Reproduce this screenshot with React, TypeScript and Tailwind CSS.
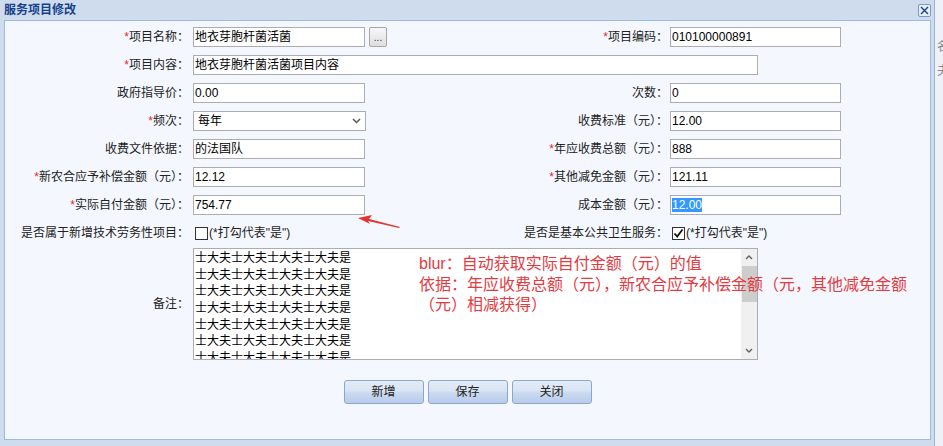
import type { ReactNode } from 'react'

const FONT = "font-['Liberation_Sans','Noto_Sans_CJK_SC',sans-serif]"

function Req() {
  return <span className="text-[#e8262b]">*</span>
}

function Field({ children, w = 'w-[172px]' }: { children?: ReactNode; w?: string }) {
  return (
    <div className={`${w} h-[20px] shrink-0 border border-[#abadb3] bg-white px-[1px] text-[12px] leading-[18px] text-black`}>
      {children}
    </div>
  )
}

function Label({ children, w }: { children: ReactNode; w: string }) {
  return <div className={`${w} shrink-0 text-right text-[12px] leading-[20px] text-[#222]`}>{children}</div>
}

function Row({ left, right }: { left: ReactNode; right?: ReactNode }) {
  return (
    <div className="flex h-[20px] items-center">
      <div className="flex w-[465px] shrink-0 items-center">{left}</div>
      {right && <div className="flex items-center">{right}</div>}
    </div>
  )
}

function CheckBox({ checked }: { checked?: boolean }) {
  return (
    <div className="flex h-[13px] w-[13px] items-center justify-center border border-[#333] bg-white">
      {checked && (
        <svg width="11" height="11" viewBox="0 0 11 11">
          <path d="M1.5 5.5 L4.2 8.5 L9.5 1.5" fill="none" stroke="#111" strokeWidth="1.8" />
        </svg>
      )}
    </div>
  )
}

function Btn({ children }: { children: ReactNode }) {
  return (
    <div className="flex h-[24px] w-[80px] items-center justify-center rounded-[3px] border border-[#8fa6cc] bg-[linear-gradient(180deg,#e4ecf8_0%,#d9e4f4_45%,#c9d9ef_55%,#b8cceb_100%)] text-[12px] text-[#222]">
      {children}
    </div>
  )
}

const NOTE_LINE = '士大夫士大夫士大夫士大夫是'

export default function App() {
  return (
    <div className={`relative flex h-[446px] w-[943px] overflow-hidden bg-[#eef2f8] ${FONT}`}>
      <div className="flex w-[935px] shrink-0 flex-col border-r border-[#9fb3cf] bg-[#cfdcee] pl-[4px] pr-[3px]">
        <div className="flex h-[20px] items-center justify-between">
          <span className="text-[12px] font-bold text-[#15428b]">服务项目修改</span>
          <div className="flex h-[13px] w-[13px] items-center justify-center rounded-[2px] border border-[#7d98c2] bg-[#e6eef9]">
            <svg width="9" height="9" viewBox="0 0 9 9">
              <path d="M1 1 L8 8 M8 1 L1 8" stroke="#15428b" strokeWidth="1.4" />
            </svg>
          </div>
        </div>

        <div className="flex h-[420px] flex-col border border-[#99bbe8] bg-[#f4f8fe] pt-[6px]">
          <div className="flex flex-col gap-[8px]">
            <Row
              left={
                <>
                  <Label w="w-[184px]"><Req />项目名称：</Label>
                  <div className="ml-[4px]"><Field>地衣芽胞杆菌活菌</Field></div>
                  <div className="ml-[4px] flex h-[20px] w-[18px] items-end justify-center rounded-[2px] border border-[#a7a7a7] bg-[linear-gradient(180deg,#f7f7f7,#dedede)] pb-[3px] text-[10px] leading-none text-[#333]">
                    ...
                  </div>
                </>
              }
              right={
                <>
                  <Label w="w-[198px]"><Req />项目编码：</Label>
                  <div className="ml-[2px]"><Field w="w-[171px]">010100000891</Field></div>
                </>
              }
            />
            <Row
              left={
                <>
                  <Label w="w-[184px]"><Req />项目内容：</Label>
                  <div className="ml-[4px]"><Field w="w-[565px]">地衣芽胞杆菌活菌项目内容</Field></div>
                </>
              }
            />
            <Row
              left={
                <>
                  <Label w="w-[184px]">政府指导价：</Label>
                  <div className="ml-[4px]"><Field>0.00</Field></div>
                </>
              }
              right={
                <>
                  <Label w="w-[198px]">次数：</Label>
                  <div className="ml-[2px]"><Field w="w-[171px]">0</Field></div>
                </>
              }
            />
            <Row
              left={
                <>
                  <Label w="w-[184px]"><Req />频次：</Label>
                  <div className="ml-[4px] flex h-[20px] w-[173px] items-center justify-between border border-[#abadb3] bg-white pl-[4px] pr-[4px] text-[12px] text-black">
                    <span>每年</span>
                    <svg width="9" height="6" viewBox="0 0 9 6">
                      <path d="M1 1 L4.5 4.5 L8 1" fill="none" stroke="#555" strokeWidth="1.5" />
                    </svg>
                  </div>
                </>
              }
              right={
                <>
                  <Label w="w-[198px]">收费标准（元）：</Label>
                  <div className="ml-[2px]"><Field w="w-[171px]">12.00</Field></div>
                </>
              }
            />
            <Row
              left={
                <>
                  <Label w="w-[184px]">收费文件依据：</Label>
                  <div className="ml-[4px]"><Field>的法国队</Field></div>
                </>
              }
              right={
                <>
                  <Label w="w-[198px]"><Req />年应收费总额（元）：</Label>
                  <div className="ml-[2px]"><Field w="w-[171px]">888</Field></div>
                </>
              }
            />
            <Row
              left={
                <>
                  <Label w="w-[184px]"><Req />新农合应予补偿金额（元）：</Label>
                  <div className="ml-[4px]"><Field>12.12</Field></div>
                </>
              }
              right={
                <>
                  <Label w="w-[198px]"><Req />其他减免金额（元）：</Label>
                  <div className="ml-[2px]"><Field w="w-[171px]">121.11</Field></div>
                </>
              }
            />
            <Row
              left={
                <>
                  <Label w="w-[184px]"><Req />实际自付金额（元）：</Label>
                  <div className="ml-[4px]"><Field>754.77</Field></div>
                </>
              }
              right={
                <>
                  <Label w="w-[198px]">成本金额（元）：</Label>
                  <div className="ml-[2px]">
                    <Field w="w-[171px]">
                      <span className="bg-[#3399ff] text-white">12.00</span>
                    </Field>
                  </div>
                </>
              }
            />
            <Row
              left={
                <>
                  <Label w="w-[184px]">是否属于新增技术劳务性项目：</Label>
                  <div className="ml-[6px] flex items-center gap-[1px] text-[12px] text-[#222]">
                    <CheckBox />
                    <span>(*打勾代表"是")</span>
                  </div>
                </>
              }
              right={
                <>
                  <Label w="w-[198px]">是否是基本公共卫生服务：</Label>
                  <div className="ml-[4px] flex items-center gap-[1px] text-[12px] text-[#222]">
                    <CheckBox checked />
                    <span>(*打勾代表"是")</span>
                  </div>
                </>
              }
            />
          </div>

          <div className="mt-[5px] flex items-center">
            <Label w="w-[184px]">备注：</Label>
            <div className="ml-[4px] flex h-[112px] w-[565px] border border-[#abadb3] bg-white">
              <div className="flex-1 overflow-hidden pl-[1px] pt-[1px] text-[12px] leading-[16.67px] text-black">
                {Array.from({ length: 7 }).map((_, i) => (
                  <div key={i}>{NOTE_LINE}</div>
                ))}
              </div>
              <div className="flex w-[16px] flex-col items-center bg-[#f0f0f0]">
                <div className="flex h-[17px] items-center justify-center">
                  <svg width="8" height="5" viewBox="0 0 8 5">
                    <path d="M1 4 L4 1 L7 4" fill="none" stroke="#606060" strokeWidth="1.4" />
                  </svg>
                </div>
                <div className="h-[36px] w-[15px] bg-[#cdcdcd]" />
                <div className="flex-1" />
                <div className="flex h-[17px] items-center justify-center">
                  <svg width="8" height="5" viewBox="0 0 8 5">
                    <path d="M1 1 L4 4 L7 1" fill="none" stroke="#606060" strokeWidth="1.4" />
                  </svg>
                </div>
              </div>
            </div>
          </div>

          <div className="mt-[20px] flex justify-center gap-[4px]">
            <Btn>新增</Btn>
            <Btn>保存</Btn>
            <Btn>关闭</Btn>
          </div>
        </div>
      </div>

      <div className="relative flex-1 overflow-hidden text-[12px] text-[#888]">
        <div className="absolute left-[2px] top-[38px]">名</div>
        <div className="absolute left-[2px] top-[62px]">夫</div>
      </div>

      {/* annotation overlay */}
      <div className="absolute left-[419px] top-[254px] text-[16px] leading-[20.5px] text-[#e53a3f]">
        <div>blur：自动获取实际自付金额（元）的值</div>
        <div className="whitespace-nowrap">依据：年应收费总额（元），新农合应予补偿金额（元，其他减免金额</div>
        <div>（元）相减获得）</div>
      </div>
      <svg className="absolute left-[355px] top-[212px]" width="50" height="20" viewBox="0 0 50 20">
        <path d="M3 6 L17 3 L14 7 L45 15 L44 16 L13 9 L15 12 Z" fill="#e5322d" />
      </svg>
    </div>
  )
}
